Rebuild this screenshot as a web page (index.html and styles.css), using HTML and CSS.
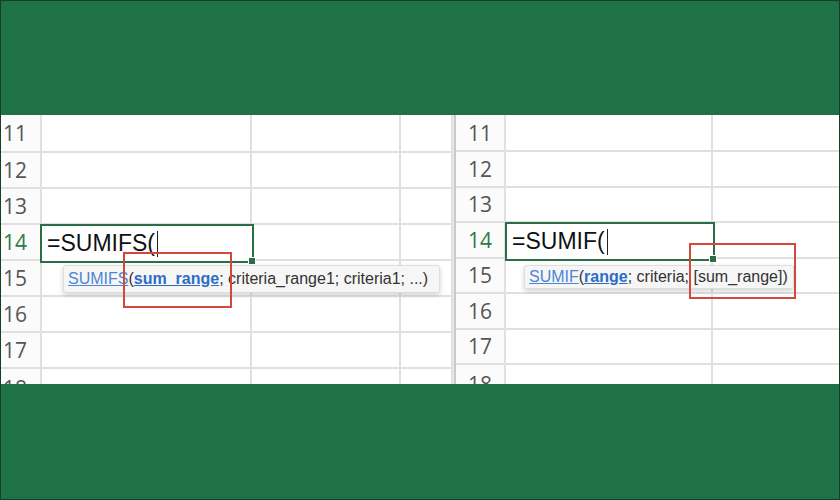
FILE: index.html
```html
<!DOCTYPE html>
<html>
<head>
  <title>SUMIFS vs SUMIF</title>
  <link rel="stylesheet" href="styles.css">
</head>

<body>
  <div class="frame">
    <div class="band"></div>

    <div class="sheets">
      <!-- left: SUMIFS -->
      <div class="sheet sheet-left">
        <div class="grid grid-left">
          <div class="rh">11</div><div class="c"></div><div class="c"></div><div class="c"></div>
          <div class="rh">12</div><div class="c"></div><div class="c"></div><div class="c"></div>
          <div class="rh">13</div><div class="c"></div><div class="c"></div><div class="c"></div>
          <div class="rh active-row">14</div><div class="c"></div><div class="c"></div><div class="c"></div>
          <div class="rh">15</div><div class="c"></div><div class="c"></div><div class="c"></div>
          <div class="rh">16</div><div class="c"></div><div class="c"></div><div class="c"></div>
          <div class="rh">17</div><div class="c"></div><div class="c"></div><div class="c"></div>
          <div class="rh">18</div><div class="c"></div><div class="c"></div><div class="c"></div>
        </div>

        <div class="active-cell active-left">
          <span class="formula">=SUMIFS(</span><span class="caret"></span>
          <span class="handle"></span>
        </div>
        <div class="tip tip-left"><span class="fn">SUMIFS</span>(<span class="arg">sum_range</span>; criteria_range1; criteria1; ...)</div>
        <div class="mark mark-left"></div>
      </div>

      <div class="divider"></div>

      <!-- right: SUMIF -->
      <div class="sheet sheet-right">
        <div class="grid grid-right">
          <div class="rh">11</div><div class="c"></div><div class="c"></div>
          <div class="rh">12</div><div class="c"></div><div class="c"></div>
          <div class="rh">13</div><div class="c"></div><div class="c"></div>
          <div class="rh active-row">14</div><div class="c"></div><div class="c"></div>
          <div class="rh">15</div><div class="c"></div><div class="c"></div>
          <div class="rh">16</div><div class="c"></div><div class="c"></div>
          <div class="rh">17</div><div class="c"></div><div class="c"></div>
          <div class="rh">18</div><div class="c"></div><div class="c"></div>
        </div>

        <div class="active-cell active-right">
          <span class="formula">=SUMIF(</span><span class="caret"></span>
          <span class="handle"></span>
        </div>
        <div class="tip tip-right"><span class="fn">SUMIF</span>(<span class="arg">range</span>; criteria; [sum_range])</div>
        <div class="mark mark-right"></div>
      </div>
    </div>

    <div class="band"></div>
  </div>
</body>
</html>
```

FILE: styles.css
```css
body {
  margin: 0;
  font-family: "Liberation Sans", Arial, sans-serif;
  background-color: #fff;
}

.frame {
  width: 840px;
  height: 500px;
  box-sizing: border-box;
  border: 1px solid #163d28;
  display: flex;
  flex-direction: column;
  overflow: hidden;
}

.band {
  height: 114px;
  background-color: #1f7246;
  flex: none;
}

.band:last-child {
  height: 115px;
}

.sheets {
  height: 269px;
  display: flex;
  flex: none;
  background-color: #fff;
}

.sheet {
  position: relative;
  overflow: hidden;
}

.sheet-left {
  width: 452px;
}

.sheet-right {
  flex: 1;
}

.divider {
  width: 3px;
  background-color: #c9c9c9;
  border-left: 1px solid #e9e9e9;
  box-sizing: border-box;
}

/* grid */
.grid {
  display: grid;
}

.grid-left {
  grid-template-columns: 41px 210px 149px 52px;
  grid-template-rows: 38px repeat(6, 36px) 40px;
}

.grid-right {
  grid-template-columns: 50px 207px 130px;
  grid-template-rows: 37px repeat(6, 35.5px) 40px;
}

.c,
.rh {
  border-right: 2px solid #e0e0e0;
  border-bottom: 2px solid #e0e0e0;
}

.rh {
  display: flex;
  align-items: center;
  font-family: "Open Sans", sans-serif;
  font-size: 21px;
  color: #555;
  background-color: #fbfbfb;
  padding-left: 2px;
}

.grid-right .rh {
  padding-left: 12px;
}

.rh.active-row {
  color: #2f7a4c;
}

/* active cell */
.active-cell {
  position: absolute;
  box-sizing: border-box;
  border: 2px solid #2a6e46;
  background-color: #fff;
  display: flex;
  align-items: center;
  padding-left: 5px;
}

.active-left {
  left: 39px;
  top: 109px;
  width: 214px;
  height: 39px;
}

.active-right {
  left: 49px;
  top: 107px;
  width: 210px;
  height: 39px;
}

.formula {
  font-size: 23px;
  color: #111;
}

.caret {
  width: 1px;
  height: 26px;
  background-color: #222;
  margin-left: 2px;
}

.handle {
  position: absolute;
  right: -4px;
  bottom: -4px;
  width: 6px;
  height: 6px;
  background-color: #2a6e46;
  border: 1px solid #fff;
}

/* tooltip */
.tip {
  position: absolute;
  box-sizing: border-box;
  background-color: #f6f6f6;
  border: 1px solid #dedede;
  border-radius: 3px;
  box-shadow: 0 2px 5px rgba(0, 0, 0, 0.18);
  font-size: 16px;
  color: #333;
  padding-left: 4px;
  white-space: nowrap;
}

.tip-left {
  left: 62px;
  top: 150px;
  width: 377px;
  height: 28px;
  line-height: 26px;
}

.tip-right {
  left: 68px;
  top: 150px;
  width: 270px;
  height: 24px;
  line-height: 22px;
}

.fn {
  color: #4d86d6;
  text-decoration: underline;
}

.arg {
  color: #2d6cc4;
  font-weight: bold;
  text-decoration: underline;
}

/* red highlight boxes */
.mark {
  position: absolute;
  box-sizing: border-box;
  border: 2px solid #d4473d;
}

.mark-left {
  left: 122px;
  top: 137px;
  width: 109px;
  height: 56px;
}

.mark-right {
  left: 233px;
  top: 128px;
  width: 107px;
  height: 56px;
}
```
